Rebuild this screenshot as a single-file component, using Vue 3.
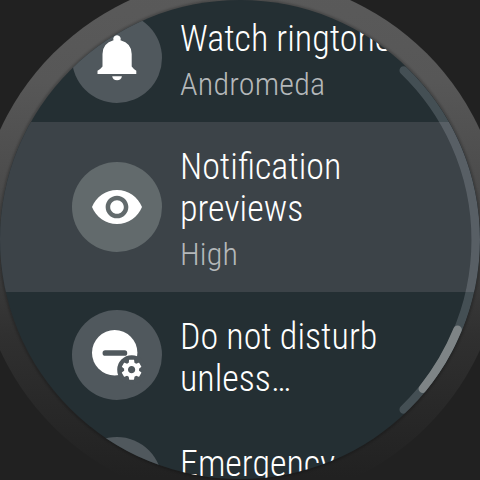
<script setup>
const rows = [
  { id: 'ringtone', title: 'Watch ringtone', value: 'Andromeda', icon: 'bell' },
  { id: 'previews', title: 'Notification previews', value: 'High', icon: 'eye', active: true },
  { id: 'dnd', title: 'Do not disturb unless…', icon: 'dnd' },
  { id: 'emergency', title: 'Emergency', value: '', icon: 'none' },
]
</script>

<template>
  <main class="watch">
    <div class="bezel">
      <section class="screen">
        <div class="list">
          <div v-for="row in rows" :key="row.id" class="row" :class="[row.id, { active: row.active }]">
            <div class="badge">
              <svg v-if="row.icon === 'bell'" viewBox="0 0 90 90">
                <path d="M45 22.3A3.6 3.6 0 0 1 48.5 27.2Q59.7 30.2 59.7 41V53.5Q61.5 56 64.3 57.7V60.9H25.5V57.7Q28.7 56 30.5 53.5V41Q30.5 30.2 41.5 27.2A3.6 3.6 0 0 1 45 22.3Z" />
                <path d="M40.2 63.2H49.9A4.9 4.6 0 0 1 40.2 63.2Z" />
              </svg>
              <svg v-else-if="row.icon === 'eye'" viewBox="0 0 90 90">
                <path transform="translate(17.73 17.73) scale(2.2727)" d="M12 4.5C7 4.5 2.73 7.61 1 12c1.73 4.39 6 7.5 11 7.5s9.27-3.11 11-7.5c-1.73-4.39-6-7.5-11-7.5zM12 17c-2.76 0-5-2.24-5-5s2.24-5 5-5 5 2.24 5 5-2.24 5-5 5zm0-8c-1.66 0-3 1.34-3 3s1.34 3 3 3 3-1.34 3-3-1.34-3-3-3z" />
              </svg>
              <svg v-else-if="row.icon === 'dnd'" viewBox="0 0 90 90">
                <circle cx="42.7" cy="42.8" r="22.7" />
                <rect class="cut" x="30.6" y="40.2" width="24.6" height="5.6" rx="2.6" />
                <circle class="cut" cx="59.7" cy="59.7" r="14.5" />
                <path transform="translate(47.6 47.7)" d="M19.43 12.98c.04-.32.07-.64.07-.98s-.03-.66-.07-.98l2.11-1.65c.19-.15.24-.42.12-.64l-2-3.46c-.12-.22-.39-.3-.61-.22l-2.49 1c-.52-.4-1.08-.73-1.69-.98l-.38-2.65C14.46 2.18 14.25 2 14 2h-4c-.25 0-.46.18-.49.42l-.38 2.65c-.61.25-1.17.59-1.69.98l-2.49-1c-.23-.09-.49 0-.61.22l-2 3.46c-.13.22-.07.49.12.64l2.11 1.65c-.04.32-.07.65-.07.98s.03.66.07.98l-2.11 1.65c-.19.15-.24.42-.12.64l2 3.46c.12.22.39.3.61.22l2.49-1c.52.4 1.08.73 1.69.98l.38 2.65c.03.24.24.42.49.42h4c.25 0 .46-.18.49-.42l.38-2.65c.61-.25 1.17-.59 1.69-.98l2.49 1c.23.09.49 0 .61-.22l2-3.46c.12-.22.07-.49-.12-.64l-2.11-1.65zM12 15.6c-1.98 0-3.6-1.62-3.6-3.6s1.62-3.6 3.6-3.6 3.6 1.62 3.6 3.6-1.62 3.6-3.6 3.6z" />
              </svg>
            </div>
            <div class="text">
              <div class="title">{{ row.title }}</div>
              <div v-if="row.value" class="value">{{ row.value }}</div>
            </div>
          </div>
        </div>
        <svg class="scrollbar" viewBox="0 0 480 480">
          <path class="track" d="M403.7 70.5A235.5 235.5 0 0 1 403.7 409.5" />
          <path class="thumb" d="M457.6 329.7A235.5 235.5 0 0 1 422.8 388.8" />
        </svg>
      </section>
    </div>
  </main>
</template>

<style>
body {
  margin: 0;
  background: #212121;
}
</style>

<style scoped>
.watch {
  width: 480px;
  height: 480px;
  overflow: hidden;
  background: #212121;
  font-family: 'Roboto Condensed', Roboto, sans-serif;
  font-stretch: 75%;
  font-weight: 300;
}
.bezel {
  box-sizing: border-box;
  width: 528px;
  height: 528px;
  margin: -24px;
  padding: 24px;
  border-radius: 50%;
  background: linear-gradient(#5a5a5a 0, #575757 20%, #4b4b4b 40%, #303030 68%, #212121 95%);
}
.screen {
  position: relative;
  width: 480px;
  height: 479px;
  overflow: hidden;
  border-radius: 50%;
  background: #242f33;
  box-shadow: 0 0 2px 2px rgba(0, 0, 0, 0.18);
}
.list {
  display: flex;
  flex-direction: column;
  margin-top: -6px;
}
.row {
  display: flex;
  flex: none;
  align-items: center;
  box-sizing: border-box;
  height: 128px;
  padding-left: 72px;
  gap: 18px;
}
.row.previews {
  height: 170px;
}
.row.dnd {
  height: 126px;
}
.row.active {
  background: #3c4348;
}
.badge {
  flex: none;
  width: 90px;
  height: 90px;
  border-radius: 50%;
  background: #50585d;
}
.active .badge {
  background: #626a6c;
}
.badge svg {
  display: block;
  width: 90px;
  height: 90px;
  fill: #fff;
}
.badge .cut {
  fill: #50585d;
}
.text {
  align-self: flex-start;
  width: 222px;
  padding-top: 24px;
}
.row.emergency .text {
  padding-top: 25px;
}
.title {
  color: #fff;
  font-size: 36px;
  line-height: 42px;
}
.value {
  margin-top: 5px;
  color: #b4b8ba;
  font-size: 32px;
  line-height: 38px;
  letter-spacing: 0.2px;
}
.scrollbar {
  position: absolute;
  top: 0;
  left: 0;
  width: 480px;
  height: 480px;
  fill: none;
  stroke-width: 8.5;
  stroke-linecap: round;
}
.track {
  stroke: rgba(230, 235, 250, 0.17);
}
.thumb {
  stroke: #7e8486;
}
</style>
